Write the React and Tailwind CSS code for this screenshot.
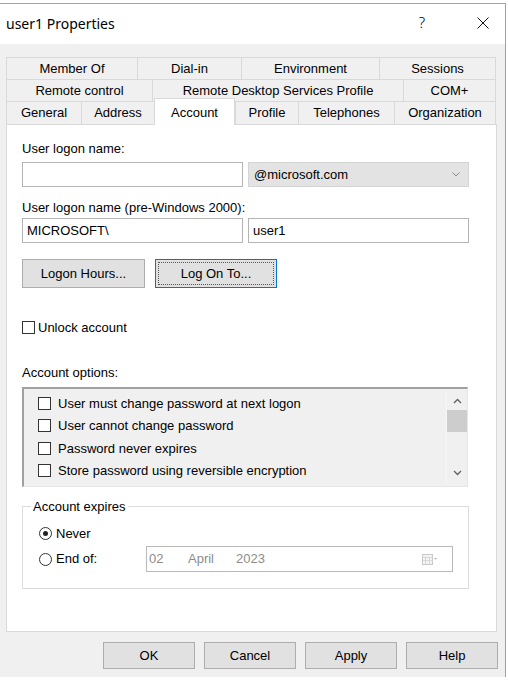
// Active Directory "user1 Properties" dialog, Account tab
const TOP_ROWS = [
  [
    { label: 'Member Of', w: 'w-[131px]' },
    { label: 'Dial-in', w: 'w-[104px]' },
    { label: 'Environment', w: 'w-[138px]' },
    { label: 'Sessions', w: 'w-[117px]' },
  ],
  [
    { label: 'Remote control', w: 'w-[146px]' },
    { label: 'Remote Desktop Services Profile', w: 'w-[251px]' },
    { label: 'COM+', w: 'w-[93px]' },
  ],
]

const BOTTOM_TABS = [
  { label: 'General', w: 'w-[75px]' },
  { label: 'Address', w: 'w-[73px]' },
  { label: 'Account', w: 'w-[81px]', active: true },
  { label: 'Profile', w: 'w-[63px]' },
  { label: 'Telephones', w: 'w-[96px]' },
  { label: 'Organization', w: 'w-[102px]' },
]

const OPTIONS = [
  'User must change password at next logon',
  'User cannot change password',
  'Password never expires',
  'Store password using reversible encryption',
]

function Tab({ label, w, last, active }) {
  if (active) {
    return (
      <div
        className={`${w} h-[27px] -mb-px relative z-10 bg-white border-t border-l border-r border-[#d9d9d9] flex justify-center pt-[4px]`}
      >
        {label}
      </div>
    )
  }
  return (
    <div
      className={`${w} h-full flex items-center justify-center border-t border-l border-[#d9d9d9] ${last ? 'border-r' : ''}`}
    >
      {label}
    </div>
  )
}

function Box() {
  return <span className="w-[13px] h-[13px] border border-[#333] bg-white shrink-0" />
}

function Radio({ checked }) {
  return (
    <span className="w-[13px] h-[13px] rounded-full border border-[#333] bg-white shrink-0 flex items-center justify-center">
      {checked && <span className="w-[5px] h-[5px] rounded-full bg-[#222]" />}
    </span>
  )
}

function Button({ children, focused, className = '' }) {
  if (focused) {
    return (
      <div className={`border border-[#0078d7] bg-[#e1e1e1] p-[2px] ${className}`}>
        <div className="w-full h-full border border-dotted border-[#555] flex items-center justify-center">
          {children}
        </div>
      </div>
    )
  }
  return (
    <div className={`border border-[#adadad] bg-[#e1e1e1] flex items-center justify-center ${className}`}>
      {children}
    </div>
  )
}

export default function App() {
  return (
    <div className="w-[508px] h-[685px] bg-white pt-[3px] font-['Liberation_Sans',Arial,sans-serif] text-[13px] text-black">
      <div className="w-[506px] border-t border-r border-[#a0a0a0]">
        {/* title bar */}
        <div className="h-[40px] bg-white flex items-center pl-[6px] font-['Noto_Sans',sans-serif] text-[14px]">
          <span className="pb-[2px]">user1 Properties</span>
          <span className="ml-auto mr-[52px] text-[15px] font-light pb-[4px]">?</span>
          <svg width="12" height="12" viewBox="0 0 12 12" className="mr-[16px] mb-[2px]">
            <path d="M0.5 0.5 L11.5 11.5 M11.5 0.5 L0.5 11.5" stroke="#111" strokeWidth="1" />
          </svg>
        </div>

        <div className="bg-[#f0f0f0] pt-[13px] pb-[8px]">
          {/* tabs */}
          <div className="ml-[6px] w-[490px]">
            {TOP_ROWS.map((row, i) => (
              <div key={i} className="h-[22px] flex">
                {row.map((t, j) => (
                  <Tab key={t.label} {...t} last={j === row.length - 1} />
                ))}
              </div>
            ))}
            <div className="h-[23px] flex items-end">
              {BOTTOM_TABS.map((t, j) => (
                <Tab key={t.label} {...t} last={j === BOTTOM_TABS.length - 1} />
              ))}
            </div>
          </div>

          {/* panel */}
          <div className="ml-[6px] w-[491px] h-[508px] bg-white border border-[#d9d9d9] pl-[15px] flex flex-col">
            <div className="mt-[16px] h-[15px] leading-[15px]">User logon name:</div>
            <div className="mt-[6px] flex gap-[5px]">
              <div className="w-[221px] h-[25px] border border-[#b4b4b4] bg-white" />
              <div className="w-[221px] h-[25px] border border-[#d4d4d4] bg-[#e3e3e3] flex items-center pl-[5px] pr-[8px]">
                <span>@microsoft.com</span>
                <svg width="8" height="5" viewBox="0 0 8 5" className="ml-auto">
                  <path d="M0.5 0.5 L4 4 L7.5 0.5" stroke="#8a8a8a" fill="none" />
                </svg>
              </div>
            </div>

            <div className="mt-[13px] h-[15px] leading-[15px]">User logon name (pre-Windows 2000):</div>
            <div className="mt-[3px] flex gap-[5px]">
              <div className="w-[221px] h-[25px] border border-[#b4b4b4] bg-white flex items-center pl-[4px]">
                MICROSOFT\
              </div>
              <div className="w-[221px] h-[25px] border border-[#b4b4b4] bg-white flex items-center pl-[4px]">
                user1
              </div>
            </div>

            <div className="mt-[16px] flex gap-[10px]">
              <Button className="w-[123px] h-[29px]">Logon Hours...</Button>
              <Button focused className="w-[122px] h-[29px]">Log On To...</Button>
            </div>

            <div className="mt-[32px] h-[15px] flex items-center gap-[3px]">
              <Box />
              <span>Unlock account</span>
            </div>

            <div className="mt-[30px] h-[15px] leading-[15px]">Account options:</div>
            <div className="mt-[7px] w-[446px] h-[100px] bg-[#f0f0f0] border-t-2 border-l-2 border-r border-b border-t-[#a0a0a0] border-l-[#a0a0a0] border-r-[#e6e6e6] border-b-[#e6e6e6] flex">
              <div className="flex-1 pl-[14px] pt-[3px]">
                {OPTIONS.map((o) => (
                  <div key={o} className="h-[22.5px] flex items-center gap-[7px]">
                    <Box />
                    <span>{o}</span>
                  </div>
                ))}
              </div>
              <div className="w-[21px] flex flex-col items-center border-l border-[#f5f5f5]">
                <svg width="9" height="6" viewBox="0 0 9 6" className="mt-[9px]">
                  <path d="M1 5 L4.5 1.5 L8 5" stroke="#606060" strokeWidth="1.3" fill="none" />
                </svg>
                <div className="mt-[6px] w-[20px] h-[22px] bg-[#cdcdcd]" />
                <svg width="9" height="6" viewBox="0 0 9 6" className="mt-auto mb-[10px]">
                  <path d="M1 1 L4.5 4.5 L8 1" stroke="#606060" strokeWidth="1.3" fill="none" />
                </svg>
              </div>
            </div>

            <fieldset className="mt-[12px] w-[447px] border border-[#dcdcdc] pb-[16px]">
              <legend className="ml-[8px] px-[2px] leading-[15px]">Account expires</legend>
              <div className="mt-[12px] ml-[16px] h-[15px] flex items-center gap-[4px]">
                <Radio checked />
                <span>Never</span>
              </div>
              <div className="mt-[5px] ml-[16px] h-[26px] flex items-center">
                <div className="w-[107px] flex items-center gap-[4px]">
                  <Radio />
                  <span>End of:</span>
                </div>
                <div className="w-[307px] h-[26px] border border-[#b9b9b9] flex items-center pl-[2px] pr-[14px] text-[#8c8c8c]">
                  <span className="w-[39px]">02</span>
                  <span className="w-[48px]">April</span>
                  <span>2023</span>
                  <svg width="16" height="11" viewBox="0 0 16 11" className="ml-auto">
                    <rect x="0.5" y="0.5" width="10" height="10" fill="#f4f4f4" stroke="#c8c8c8" />
                    <path d="M0.5 3.5 H10.5 M0.5 6.5 H10.5 M3.5 3.5 V10.5 M7.5 3.5 V10.5" stroke="#d8d8d8" />
                    <path d="M12 4 L15 4 L13.5 5.8 Z" fill="#b0b0b0" />
                  </svg>
                </div>
              </div>
            </fieldset>
          </div>

          {/* footer */}
          <div className="mt-[10px] pl-[103px] flex gap-[9px]">
            <Button className="w-[92px] h-[27px]">OK</Button>
            <Button className="w-[92px] h-[27px]">Cancel</Button>
            <Button className="w-[92px] h-[27px]">Apply</Button>
            <Button className="w-[92px] h-[27px]">Help</Button>
          </div>
        </div>
      </div>
    </div>
  )
}
